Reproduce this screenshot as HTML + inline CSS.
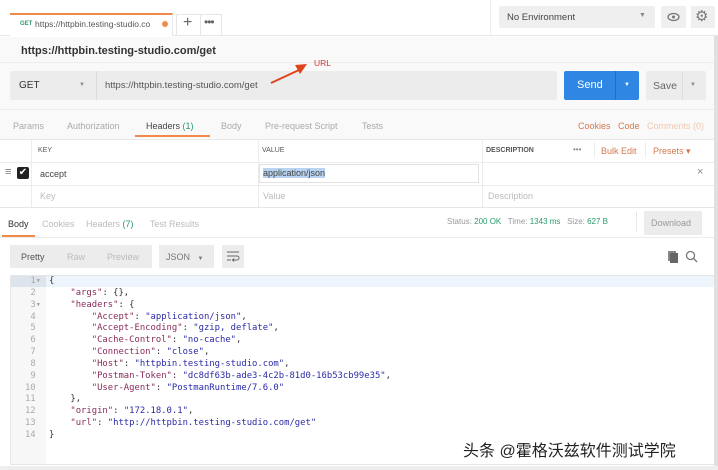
<!DOCTYPE html>
<html><head><meta charset="utf-8"><style>
*{box-sizing:border-box;margin:0;padding:0}
body{width:718px;height:470px;overflow:hidden;background:#fff;font-family:"Liberation Sans",sans-serif;font-size:10px;color:#505050;position:relative}
.a{position:absolute;white-space:nowrap}
.mono{font-family:"DejaVu Sans Mono","Liberation Mono",monospace;font-size:8.9px}
.s{color:#2a2aa8}.k{color:#8a2a5a}
</style></head><body>
<div class="a" style="left:0;top:0;width:718px;height:36px;background:#fff;border-bottom:1px solid #e6e6e6"></div>
<div class="a" style="left:10px;top:13px;width:163px;height:23px;border-top:2px solid #f08a4b;background:#fff;border-right:1px solid #e6e6e6"></div>
<div class="a" style="left:20px;top:21px;font-size:6px;color:#2a9a6a;font-weight:bold">GET</div>
<div class="a" style="left:35px;top:19px;font-size:8.5px;color:#555;width:126px;overflow:hidden">https://httpbin.testing-studio.co</div>
<div class="a" style="left:162px;top:21px;width:6px;height:6px;border-radius:50%;background:#f08a4b"></div>
<div class="a" style="left:176px;top:14px;width:46px;height:22px;border:1px solid #e6e6e6;border-bottom:none"></div>
<div class="a" style="left:183px;top:14px;font-size:16px;color:#666">+</div>
<div class="a" style="left:200px;top:14px;width:1px;height:22px;background:#e6e6e6"></div>
<div class="a" style="left:204px;top:15px;font-size:12px;color:#666;letter-spacing:-1px">•••</div>
<div class="a" style="left:490px;top:0;width:1px;height:36px;background:#eee"></div>
<div class="a" style="left:499px;top:6px;width:156px;height:22px;background:#efefef;border-radius:2px"></div>
<div class="a" style="left:507px;top:12px;font-size:9.5px;color:#444">No Environment</div>
<div class="a" style="left:639px;top:12px;font-size:7px;color:#888">▼</div>
<div class="a" style="left:661px;top:6px;width:25px;height:22px;background:#efefef"></div>
<svg class="a" style="left:667px;top:12px" width="13" height="10"><ellipse cx="6.5" cy="5" rx="5.5" ry="3.5" fill="none" stroke="#777" stroke-width="1.3"/><circle cx="6.5" cy="5" r="1.5" fill="#777"/></svg>
<div class="a" style="left:691px;top:6px;width:24px;height:22px;background:#efefef"></div>
<div class="a" style="left:695px;top:7px;font-size:15px;color:#777">⚙</div>

<div class="a" style="left:0;top:37px;width:714px;height:170px;background:#f9f9f9"></div>
<div class="a" style="left:21px;top:45px;font-size:11px;font-weight:bold;color:#333">https://httpbin.testing-studio.com/get</div>
<div class="a" style="left:0;top:62px;width:714px;height:1px;background:#ececec"></div>
<div class="a" style="left:314px;top:58px;font-size:8.5px;color:#d33">URL</div>
<div class="a" style="left:10px;top:71px;width:547px;height:29px;background:#ececec;border-radius:2px"></div>
<svg class="a" style="left:265px;top:58px" width="50" height="30"><line x1="6" y1="25" x2="34" y2="12" stroke="#e0441c" stroke-width="2"/><polygon points="42,6 30,7 35,16" fill="#e0441c"/></svg>
<div class="a" style="left:96px;top:71px;width:1px;height:29px;background:#dcdcdc"></div>
<div class="a" style="left:19px;top:80px;font-size:10px;color:#333">GET</div>
<div class="a" style="left:79px;top:82px;font-size:6px;color:#888">▼</div>
<div class="a" style="left:105px;top:80px;font-size:9.5px;color:#555">https://httpbin.testing-studio.com/get</div>
<div class="a" style="left:564px;top:71px;width:75px;height:29px;background:#2f87e3;border-radius:2px"></div>
<div class="a" style="left:615px;top:71px;width:1px;height:29px;background:#1f6fc8"></div>
<div class="a" style="left:577px;top:79px;font-size:11px;color:#fff">Send</div>
<div class="a" style="left:624px;top:82px;font-size:6px;color:#fff">▼</div>
<div class="a" style="left:646px;top:71px;width:60px;height:29px;background:#ececec;border-radius:2px"></div>
<div class="a" style="left:682px;top:71px;width:1px;height:29px;background:#ddd"></div>
<div class="a" style="left:653px;top:80px;font-size:10.5px;color:#666">Save</div>
<div class="a" style="left:690px;top:82px;font-size:6px;color:#888">▼</div>
<div class="a" style="left:0;top:109px;width:714px;height:1px;background:#ececec"></div>
<div class="a" style="left:13px;top:121px;font-size:9px;color:#aaa">Params</div>
<div class="a" style="left:67px;top:121px;font-size:9px;color:#aaa">Authorization</div>
<div class="a" style="left:146px;top:121px;font-size:9px;color:#444">Headers <span style="color:#2a9a6a">(1)</span></div>
<div class="a" style="left:135px;top:135px;width:75px;height:2px;background:#f08a4b"></div>
<div class="a" style="left:221px;top:121px;font-size:9px;color:#aaa">Body</div>
<div class="a" style="left:265px;top:121px;font-size:9px;color:#aaa">Pre-request Script</div>
<div class="a" style="left:362px;top:121px;font-size:9px;color:#aaa">Tests</div>
<div class="a" style="left:578px;top:121px;font-size:9px;color:#d07a50">Cookies</div>
<div class="a" style="left:618px;top:121px;font-size:9px;color:#d07a50">Code</div>
<div class="a" style="left:647px;top:121px;font-size:9px;color:#f0c8b0">Comments (0)</div>
<div class="a" style="left:0;top:139px;width:714px;height:1px;background:#e8e8e8"></div>
<div class="a" style="left:0;top:140px;width:714px;height:67px;background:#fff"></div>
<div class="a" style="left:0;top:162px;width:714px;height:1px;background:#ececec"></div>
<div class="a" style="left:0;top:185px;width:714px;height:1px;background:#ececec"></div>
<div class="a" style="left:0;top:207px;width:714px;height:1px;background:#e6e6e6"></div>
<div class="a" style="left:31px;top:140px;width:1px;height:67px;background:#ececec"></div>
<div class="a" style="left:258px;top:140px;width:1px;height:67px;background:#ececec"></div>
<div class="a" style="left:482px;top:140px;width:1px;height:67px;background:#ececec"></div>
<div class="a" style="left:38px;top:147px;font-size:7px;color:#555">KEY</div>
<div class="a" style="left:262px;top:147px;font-size:7px;color:#555">VALUE</div>
<div class="a" style="left:486px;top:147px;font-size:7px;color:#555;font-weight:bold">DESCRIPTION</div>
<div class="a" style="left:573px;top:145px;font-size:8px;color:#888">•••</div>
<div class="a" style="left:594px;top:142px;width:1px;height:16px;background:#eee"></div>
<div class="a" style="left:601px;top:146px;font-size:9px;color:#d07a50">Bulk Edit</div>
<div class="a" style="left:645px;top:142px;width:1px;height:16px;background:#eee"></div>
<div class="a" style="left:653px;top:146px;font-size:9px;color:#d07a50">Presets ▾</div>
<div class="a" style="left:5px;top:166px;font-size:11px;color:#777">≡</div>
<div class="a" style="left:17px;top:167px;width:12px;height:12px;background:#222;border-radius:2px;color:#fff;font-size:10px;line-height:12px;text-align:center">✔</div>
<div class="a" style="left:40px;top:169px;font-size:9px;color:#444">accept</div>
<div class="a" style="left:259px;top:164px;width:220px;height:19px;border:1px solid #e2e2e2"></div>
<div class="a" style="left:263px;top:168px;font-size:9px;color:#444;background:#b8d4f0">application/json</div>
<div class="a" style="left:697px;top:166px;font-size:11px;color:#888">×</div>
<div class="a" style="left:40px;top:191px;font-size:9px;color:#bbb">Key</div>
<div class="a" style="left:263px;top:191px;font-size:9px;color:#bbb">Value</div>
<div class="a" style="left:488px;top:191px;font-size:9px;color:#bbb">Description</div>

<div class="a" style="left:8px;top:219px;font-size:9px;color:#333">Body</div>
<div class="a" style="left:2px;top:235px;width:33px;height:2px;background:#f08a4b"></div>
<div class="a" style="left:42px;top:219px;font-size:9px;color:#bbb">Cookies</div>
<div class="a" style="left:86px;top:219px;font-size:9px;color:#bbb">Headers <span style="color:#2a9a6a">(7)</span></div>
<div class="a" style="left:150px;top:219px;font-size:9px;color:#bbb">Test Results</div>
<div class="a" style="left:447px;top:217px;font-size:8px;color:#999">Status: <span style="color:#2a9a6a">200 OK</span>&nbsp;&nbsp; Time: <span style="color:#2a9a6a">1343 ms</span>&nbsp;&nbsp; Size: <span style="color:#2a9a6a">627 B</span></div>
<div class="a" style="left:636px;top:212px;width:1px;height:20px;background:#e6e6e6"></div>
<div class="a" style="left:644px;top:211px;width:58px;height:24px;background:#ececec"></div>
<div class="a" style="left:651px;top:218px;font-size:9px;color:#999">Download</div>
<div class="a" style="left:0;top:237px;width:714px;height:1px;background:#ececec"></div>
<div class="a" style="left:10px;top:245px;width:142px;height:23px;background:#ececec"></div>
<div class="a" style="left:21px;top:252px;font-size:9px;color:#555">Pretty</div>
<div class="a" style="left:67px;top:252px;font-size:9px;color:#bbb">Raw</div>
<div class="a" style="left:107px;top:252px;font-size:9px;color:#bbb">Preview</div>
<div class="a" style="left:159px;top:245px;width:55px;height:23px;background:#ececec"></div>
<div class="a" style="left:166px;top:252px;font-size:9px;color:#777">JSON&nbsp;&nbsp; <span style="font-size:6px">▼</span></div>
<div class="a" style="left:222px;top:245px;width:22px;height:23px;background:#ececec"></div>
<svg class="a" style="left:226px;top:250px" width="14" height="12"><path d="M1 2H13M1 6H11a2 2 0 0 1 0 4H7M1 10H5M8 8.5l-1.5 1.5 1.5 1.5" fill="none" stroke="#666" stroke-width="1"/></svg>
<div class="a" style="left:668px;top:251px;width:8px;height:10px;background:#888"></div>
<div class="a" style="left:670px;top:253px;width:8px;height:10px;background:#666"></div>
<svg class="a" style="left:685px;top:250px" width="13" height="13"><circle cx="5.5" cy="5.5" r="4" fill="none" stroke="#777" stroke-width="1.3"/><line x1="8.5" y1="8.5" x2="12" y2="12" stroke="#777" stroke-width="1.3"/></svg>

<div class="a" style="left:10px;top:275px;width:704px;height:190px;border:1px solid #e6e6e6;border-right:none"></div>
<div class="a" style="left:11px;top:276px;width:35px;height:188px;background:#f7f7f7"></div>
<div class="a" style="left:11px;top:276px;width:703px;height:11px;background:#eef4fb"></div>
<div class="a" style="left:11px;top:276px;width:35px;height:11px;background:#dde4ec"></div>
<div class="a mono" style="left:11px;top:276px;width:30px;text-align:right;line-height:11.85px;color:#aaa;white-space:pre">1▾
2 
3▾
4 
5 
6 
7 
8 
9 
10 
11 
12 
13 
14 </div>
<div class="a mono" style="left:49px;top:276px;line-height:11.85px;color:#333;white-space:pre">{
    <span class="k">"args"</span>: {},
    <span class="k">"headers"</span>: {
        <span class="k">"Accept"</span>: <span class="s">"application/json"</span>,
        <span class="k">"Accept-Encoding"</span>: <span class="s">"gzip, deflate"</span>,
        <span class="k">"Cache-Control"</span>: <span class="s">"no-cache"</span>,
        <span class="k">"Connection"</span>: <span class="s">"close"</span>,
        <span class="k">"Host"</span>: <span class="s">"httpbin.testing-studio.com"</span>,
        <span class="k">"Postman-Token"</span>: <span class="s">"dc8df63b-ade3-4c2b-81d0-16b53cb99e35"</span>,
        <span class="k">"User-Agent"</span>: <span class="s">"PostmanRuntime/7.6.0"</span>
    },
    <span class="k">"origin"</span>: <span class="s">"172.18.0.1"</span>,
    <span class="k">"url"</span>: <span class="s">"http://httpbin.testing-studio.com/get"</span>
}</div>
<div class="a" style="left:714px;top:36px;width:4px;height:434px;background:#e0e0e0"></div>
<div class="a" style="left:0;top:466px;width:718px;height:4px;background:#eee"></div>
<div class="a" style="left:463px;top:437px;font-size:16px;color:#222;font-family:'Liberation Sans','Noto Sans CJK SC',sans-serif;text-shadow:0 0 2px #fff,0 0 2px #fff">头条 @霍格沃兹软件测试学院</div>
</body></html>
